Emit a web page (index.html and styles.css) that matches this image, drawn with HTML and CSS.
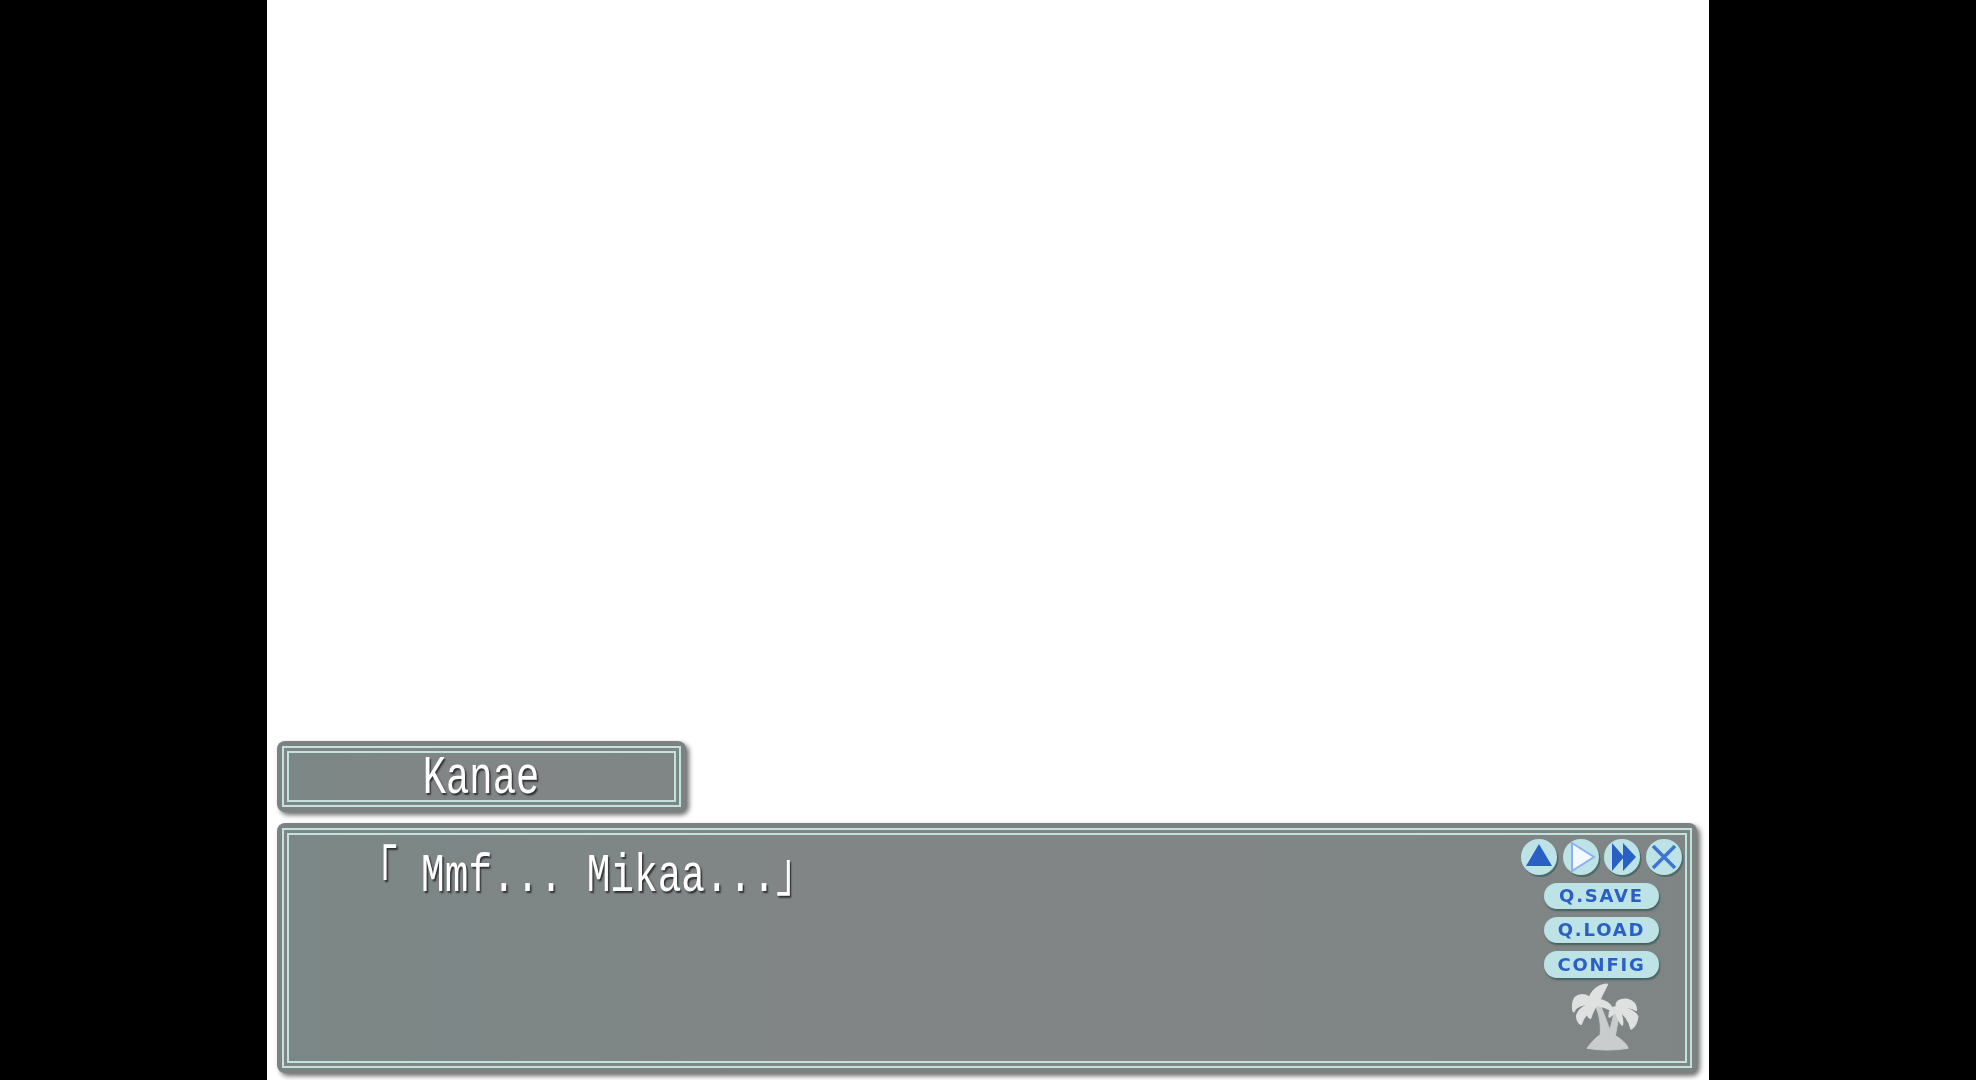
FILE: index.html
```html
<!DOCTYPE html>
<html lang="en">
<head>
    <meta charset="UTF-8">
    <title>Kanae</title>
    <link rel="stylesheet" href="styles.css">
</head>
<body>
    <div class="stage">
        <div class="panel name-panel">
            <div class="panel-line name-line">
                <span class="name-text">Kanae</span>
            </div>
        </div>
        <div class="panel message-panel">
            <div class="panel-line message-line">
                <div class="message">
                    <span class="message-text">「 Mmf... Mikaa...」</span>
                </div>
                <div class="controls">
                    <div class="round-buttons">
                        <svg class="round-button" viewBox="0 0 40 40">
                            <circle class="disc-shadow" cx="20.5" cy="21" r="18"/>
                            <circle class="disc" cx="19" cy="19" r="18"/>
                            <path class="solid" d="M19 6 L32 28 H6 Z"/>
                        </svg>
                        <svg class="round-button" viewBox="0 0 40 40">
                            <circle class="disc-shadow" cx="20.5" cy="21" r="18"/>
                            <circle class="disc" cx="19" cy="19" r="18"/>
                            <path class="play" d="M10 5 L32 19 L10 33 Z"/>
                        </svg>
                        <svg class="round-button" viewBox="0 0 40 40">
                            <circle class="disc-shadow" cx="20.5" cy="21" r="18"/>
                            <circle class="disc" cx="19" cy="19" r="18"/>
                            <path class="solid" d="M9 5 L21 19 L9 33 Z M20 5 L33 19 L20 33 Z"/>
                        </svg>
                        <svg class="round-button" viewBox="0 0 40 40">
                            <circle class="disc-shadow" cx="20.5" cy="21" r="18"/>
                            <circle class="disc" cx="19" cy="19" r="18"/>
                            <path class="cross" d="M8 8 L30 30 M30 8 L8 30"/>
                        </svg>
                    </div>
                    <div class="pill">Q.SAVE</div>
                    <div class="pill">Q.LOAD</div>
                    <div class="pill pill-config">CONFIG</div>
                    <svg class="palm" viewBox="150 65 205 205">
                        <path class="palm-base" d="M198 262 C215 240 235 215 260 215 C285 218 322 250 322 262 Q260 272 198 262 Z"/>
                        <path class="palm-base" d="M222 130 C238 165 240 195 238 222 L272 222 C262 190 250 160 236 125 Z"/>
                        <path class="palm-base" d="M282 145 C276 175 268 200 264 224 L284 224 C288 195 294 170 298 148 Z"/>
                        <path d="M205 118 C210 90 232 72 258 70 C250 85 240 105 230 128 Z"/>
                        <path d="M225 128 C205 100 180 95 163 110 C155 122 155 140 158 150 C165 135 185 125 225 128 Z"/>
                        <path d="M222 126 C195 130 173 145 168 165 C170 178 174 186 180 188 C185 170 200 150 228 132 Z"/>
                        <path d="M196 132 C196 150 200 165 208 170 C212 155 218 145 226 130 Z"/>
                        <path d="M226 116 C250 115 270 128 276 148 C262 140 245 134 228 130 Z"/>
                        <path d="M288 136 C285 122 300 112 320 116 C336 120 345 130 346 146 C335 138 310 134 288 140 Z"/>
                        <path d="M288 136 C315 138 342 152 350 166 C348 182 340 196 332 202 C328 180 310 155 288 142 Z"/>
                        <path d="M290 138 C272 136 266 148 266 166 C275 160 285 152 294 144 Z"/>
                        <path d="M290 140 C300 155 306 172 304 190 C295 180 288 160 284 144 Z"/>
                    </svg>
                </div>
            </div>
        </div>
    </div>
</body>
</html>
```

FILE: styles.css
```css
:root {
    --panel-bg: #7c8282;
    --panel-line: #c4e2dc;
    --button-bg: #bde3e6;
    --button-blue: #2a5fc4;
}

body {
    display: flex;
    justify-content: center;
    height: 1080px;
    margin: 0;
    background-color: #000;
    overflow: hidden;
}

.stage {
    display: flex;
    flex-direction: column;
    justify-content: flex-end;
    gap: 11px;
    width: 1442px;
    padding: 0 12px 7px 10px;
    box-sizing: border-box;
    background-color: #fff;
    filter: blur(0.6px);
}

.panel {
    padding: 5px;
    box-sizing: border-box;
    background-color: var(--panel-bg);
    border-radius: 8px;
    box-shadow: 3px 3px 5px rgba(60, 60, 60, 0.75);
}

.panel-line {
    height: 100%;
    box-sizing: border-box;
    border: 7px double var(--panel-line);
    background: linear-gradient(90deg, #7b8786, #828586 40%, #7f8585);
}

.name-panel {
    width: 409px;
    height: 71px;
}

.name-line {
    display: flex;
    justify-content: center;
    align-items: center;
    padding-top: 5px;
}

.name-text,
.message-text {
    display: inline-block;
    font-family: "Liberation Mono", "Noto Sans CJK JP", monospace;
    font-size: 54px;
    line-height: 60px;
    color: #fff;
    text-shadow: 2px 2px 2px rgba(30, 30, 30, 0.85);
    white-space: pre;
}

.name-text {
    transform: scaleX(0.72);
}

.message-panel {
    height: 250px;
}

.message-line {
    display: flex;
    justify-content: space-between;
    padding: 3px 2px 0 69px;
}

.message {
    padding-top: 9px;
}

.message-text {
    transform: scaleX(0.73);
    transform-origin: left;
}

.controls {
    display: flex;
    flex-direction: column;
    align-items: center;
    width: 163px;
}

.round-buttons {
    display: flex;
    flex-shrink: 0;
    align-self: flex-start;
    justify-content: space-between;
    width: 165px;
    margin-bottom: 5px;
}

.round-button {
    width: 40px;
    height: 40px;
}

.disc {
    fill: var(--button-bg);
}

.disc-shadow {
    fill: #4f6a6a;
}

.solid {
    fill: var(--button-blue);
}

.play {
    fill: #f2f8ff;
    stroke: #8fb0ee;
    stroke-width: 2;
}

.cross {
    fill: none;
    stroke: #3f74d4;
    stroke-width: 3.5;
}

.pill {
    width: 115px;
    height: 26px;
    margin-bottom: 8px;
    border-radius: 13px;
    background-color: var(--button-bg);
    box-shadow: 1px 2px 2px #45605f;
    font-family: "DejaVu Sans", sans-serif;
    font-size: 18px;
    font-weight: 700;
    line-height: 26px;
    letter-spacing: 1.8px;
    text-align: center;
    white-space: nowrap;
    color: var(--button-blue);
}

.pill-config {
    height: 27px;
    margin-bottom: 5px;
    line-height: 28px;
}

.palm {
    width: 68px;
    height: 68px;
    margin-left: 6px;
    fill: #dfe1e1;
    stroke: #dfe1e1;
    stroke-width: 7;
    stroke-linejoin: round;
}

.palm-base {
    fill: #c9cdcd;
    stroke: #c9cdcd;
    stroke-width: 3;
}
```
